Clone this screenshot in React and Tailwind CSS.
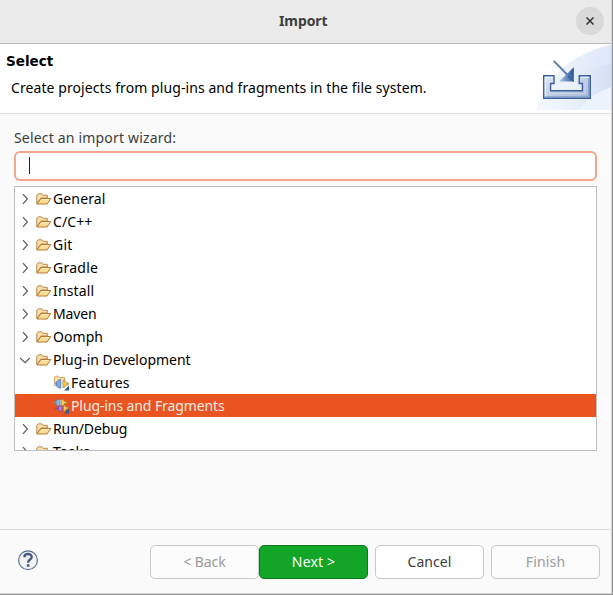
import React from "react";

function Chevron({ open }) {
  return (
    <svg className="h-[14px] w-[14px] shrink-0" viewBox="0 0 14 14" fill="none" stroke="#5c5c5c" strokeWidth="1.2">
      {open ? <path d="M2.2 5 L7 9.6 L11.8 5" /> : <path d="M5 2.2 L9.4 7 L5 11.8" />}
    </svg>
  );
}

function Folder() {
  return (
    <svg className="h-4 w-4 shrink-0" viewBox="0 0 16 16">
      <path d="M.8 12.6 V4.4 L2.3 2.8 H5.6 L7 4.3 H11.3 V7 H5 Z" fill="#f8dfae" stroke="#bd874c" />
      <path d="M.9 13 L5 7.5 H14.8 L11 13 Z" fill="#f9dc96" stroke="#b9792f" />
      <path d="M5.8 8.6 H12.8" stroke="#fff0c6" />
    </svg>
  );
}

function FeatureIcon() {
  return (
    <svg className="h-4 w-4 shrink-0" viewBox="0 0 16 16">
      <path d="M1.5 9 V2.2 L2.5 1.2 H5.5 L6.7 2.5 H11.5 V8 Z" fill="#f8dfaa" stroke="#d2a35c" />
      <path d="M1 7.8 H4 M1 10.2 H4" stroke="#7ba3bd" />
      <path d="M3.4 7 L6 4.8 H8 V13 H6 L3.4 11 Z" fill="#86a9d9" stroke="#5484b9" />
      <path d="M9.8 5.6 L12 6 L13 7.8 H15.2 V10 H13 L11.5 12.4 H9.8 Z" fill="#f0ca55" stroke="#ba8a28" strokeWidth=".8" />
      <path d="M8.9 5 V12.7" stroke="#eef5fa" />
      <path d="M16 10.5 V15.5 H11 Z" fill="#2c6093" />
    </svg>
  );
}

function PluginIcon() {
  return (
    <svg className="h-4 w-4 shrink-0" viewBox="0 0 16 16">
      <path d="M0 4.5 H4 M9 4.5 H14" stroke="#65a4a2" />
      <path d="M3 3 L5 1.5 H7 V8 H5 L3 6.5 Z" fill="#83b8e2" stroke="#468bc0" strokeWidth=".8" />
      <path d="M8.5 1.5 H10 L11.5 3.5 H13.5 V5.5 H11.5 L10 8 H8.5 Z" fill="#efd05c" stroke="#a78332" strokeWidth=".7" />
      <path d="M7.8 2 V7.6" stroke="#e9f2f2" strokeWidth=".8" />
      <path d="M2 10.5 H6" stroke="#7d4bb1" strokeWidth="1.3" />
      <path d="M5.5 9 L7 7.8 H9 V13.3 H7 L5.5 12 Z" fill="#a985dc" stroke="#7448b1" strokeWidth=".8" />
      <path d="M10.5 7.5 H12 L13 9 H15 V11 H13 L12 13 H10.5 Z" fill="#efd05c" stroke="#a78332" strokeWidth=".7" />
      <path d="M16 10.5 V15.5 H11 Z" fill="#2c6093" />
    </svg>
  );
}

function Banner() {
  return (
    <svg className="h-[66px] w-[75px] shrink-0" viewBox="0 0 75 66">
      <defs>
        <linearGradient id="sky" x1="0" x2="1">
          <stop offset="0" stopColor="#f4f7fe" />
          <stop offset="1" stopColor="#dde7f8" />
        </linearGradient>
        <linearGradient id="ray" x1="0" x2="1">
          <stop offset="0" stopColor="#ffffff" stopOpacity=".1" />
          <stop offset="1" stopColor="#cddaf3" stopOpacity=".6" />
        </linearGradient>
        <linearGradient id="tray" x1="0" y1="0" x2="1" y2="1">
          <stop offset="0" stopColor="#dfe7f3" />
          <stop offset="1" stopColor="#a3b7d8" />
        </linearGradient>
        <linearGradient id="head" x1="0" y1=".6" x2="1" y2=".4">
          <stop offset="0" stopColor="#a9bfdf" />
          <stop offset=".55" stopColor="#5f82b9" />
          <stop offset="1" stopColor="#2b5394" />
        </linearGradient>
      </defs>
      <path d="M1 66 C5 36 38 8 75 1 V66 Z" fill="url(#sky)" />
      <path d="M30 34 Q50 24 75 20 V45 Q52 50 40 66 H10 Z" fill="url(#ray)" />
      <path d="M42 66 Q55 50 75 43 V66 Z" fill="#edf3fd" />
      <path d="M7.7 31.7 H18 V39.5 H14.6 V46.7 H46.4 V39.5 H43.2 V31.7 H54.3 V54.3 H7.7 Z" fill="url(#tray)" stroke="#3d609c" strokeWidth="1.4" />
      <path d="M9.3 52.5 V33.3 H16.5 M44.8 33.3 H52.7" fill="none" stroke="#f0f4fa" />
      <path d="M12 49.5 H49 V37" fill="none" stroke="#c9d6ea" strokeWidth="1.2" />
      <path d="M9.5 52.8 H52.7 V34" fill="none" stroke="#829dc9" />
      <path d="M17.8 16.8 L33 32.5" stroke="#587bb1" strokeWidth="1.9" />
      <path d="M37.8 23.3 V37.6 H23.2 Z" fill="url(#head)" />
      <path d="M37.8 37.6 L32 32" stroke="#2b5394" strokeWidth="1" />
    </svg>
  );
}

const rows = [
  { label: "General", spacing: "tracking-[0.13px]" },
  { label: "C/C++", spacing: "tracking-[0.1px]" },
  { label: "Git", spacing: "tracking-[0.2px]" },
  { label: "Gradle", spacing: "tracking-[0.27px]" },
  { label: "Install", spacing: "tracking-[0.15px]" },
  { label: "Maven", spacing: "tracking-[-0.15px]" },
  { label: "Oomph", spacing: "tracking-[0.05px]" },
  { label: "Plug-in Development", open: true, spacing: "tracking-[-0.02px]" },
  { label: "Features", icon: <FeatureIcon />, spacing: "tracking-[0.25px]" },
  { label: "Plug-ins and Fragments", icon: <PluginIcon />, selected: true, spacing: "tracking-[-0.1px]" },
  { label: "Run/Debug", spacing: "tracking-[-0.1px]" },
  { label: "Tasks", spacing: "tracking-[0.4px]" },
];

function Row({ label, open, icon, selected, spacing }) {
  return (
    <div className={"flex h-[23px] shrink-0 items-center " + (selected ? "bg-[#e95420] text-[#fbe9e2]" : "text-black")}>
      {icon ? <span className="mr-[2px] ml-[38px] flex">{icon}</span> : (
        <>
          <span className="ml-[3px] flex"><Chevron open={open} /></span>
          <span className="mr-[1px] ml-[4px] flex"><Folder /></span>
        </>
      )}
      <span className={"leading-[23px] " + spacing}>{label}</span>
    </div>
  );
}

function Button({ children, look }) {
  return (
    <button className={"flex h-[34px] w-[109px] items-center justify-center rounded-[5px] border pb-[2px] " + look}>
      {children}
    </button>
  );
}

export default function App() {
  return (
    <div className="flex h-[595px] w-[613px] flex-col overflow-hidden border-r border-b border-[#929292] bg-[#fafafa] font-['Noto_Sans','Open_Sans',sans-serif] text-[14px] tracking-[-0.1px] whitespace-nowrap">
      <div className="flex min-h-0 flex-1 flex-col border-r border-b border-[#d4d4d4]">
        <header className="flex h-11 shrink-0 items-center border-b border-[#b8b8b8] bg-[#ebebeb]">
          <h1 className="ml-[279px] -mt-[2px] w-[297px] font-bold text-[#3d3d3d]">Import</h1>
          <button className="-mt-[1px] flex h-7 w-7 items-center justify-center rounded-full bg-[#d9d9d9]">
            <svg className="h-2 w-2" viewBox="0 0 8 8" stroke="#333333" strokeWidth="1.5"><path d="M.5 .5 L7.5 7.5 M7.5 .5 L.5 7.5" /></svg>
          </button>
        </header>
        <section className="flex h-[70px] shrink-0 justify-between border-b border-[#dedede] bg-white text-black">
          <div className="pt-[7px] pl-[6px]">
            <h2 className="font-['DejaVu_Sans',sans-serif] text-[13.5px] leading-5 font-bold tracking-normal">Select</h2>
            <p className="mt-[7px] pl-[5px] leading-5 tracking-[0.08px]">Create projects from plug-ins and fragments in the file system.</p>
          </div>
          <Banner />
        </section>
        <main className="flex h-[415px] shrink-0 flex-col pr-[14px] pl-[14px]">
          <label className="mt-[14px] h-[23px] leading-5 tracking-[0.18px] text-[#3d3d3d]">Select an import wizard:</label>
          <div className="flex h-[30px] w-[583px] shrink-0 items-center rounded-[6px] border-2 border-[#f3a68c] bg-white pl-[13px]">
            <span className="-mt-px h-[17px] w-px bg-[#222222]" />
          </div>
          <div className="mt-[5px] flex h-[265px] w-[583px] shrink-0 flex-col overflow-hidden border border-[#bfbfbf] bg-white">
            {rows.map((r) => <Row key={r.label} {...r} />)}
          </div>
        </main>
        <footer className="flex flex-1 border-t border-[#dedede] pt-[15px]">
          <svg className="mt-[5px] ml-[17px] h-[21px] w-[22px]" viewBox="0 0 22 21">
            <circle cx="11" cy="10.3" r="9.4" fill="#f2f2f3" stroke="#5c6e91" strokeWidth="1.2" />
            <path d="M7.4 7.3 C7.4 2.8 14.7 3 14.7 7 C14.7 9.8 11.1 9.3 11.1 12.8" fill="none" stroke="#465a80" strokeWidth="2.4" />
            <rect x="9.8" y="14.2" width="2.7" height="2.6" rx=".6" fill="#465a80" />
          </svg>
          <div className="ml-[111px] flex">
            <Button look="border-[#c8c8c8] bg-[#fcfcfc] text-[#9b9b9b]">&lt; Back</Button>
            <Button look="border-[#0d7a1c] bg-[#13a527] text-white tracking-[0.15px]">Next &gt;</Button>
            <span className="w-[7px]" />
            <Button look="border-[#c8c8c8] bg-white text-[#3d3d3d] tracking-[0.05px]">Cancel</Button>
            <span className="w-[7px]" />
            <Button look="border-[#c8c8c8] bg-[#fcfcfc] text-[#9b9b9b] tracking-[0.15px]">Finish</Button>
          </div>
        </footer>
      </div>
    </div>
  );
}
